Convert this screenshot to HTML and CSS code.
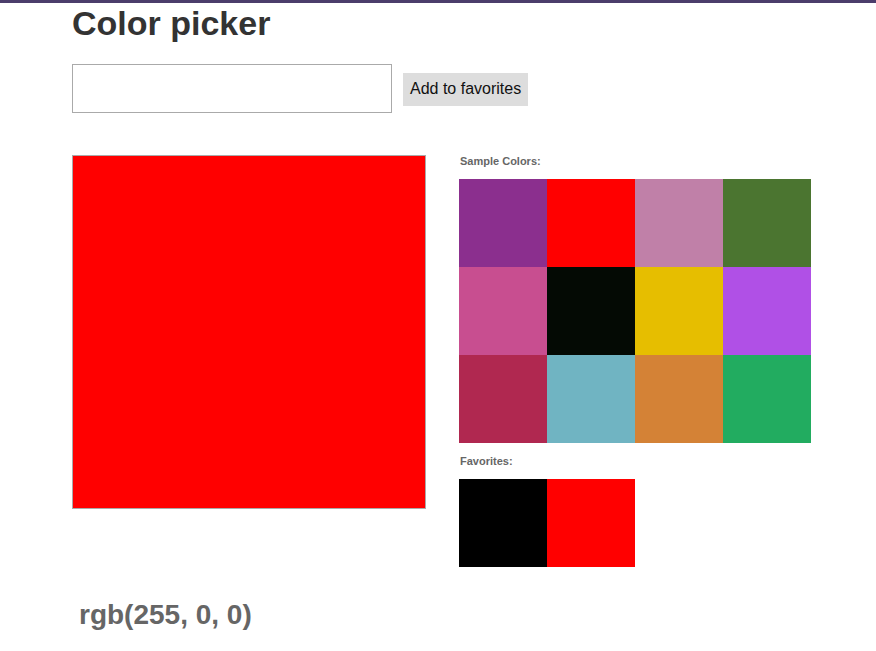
FILE: index.html
```html
<!DOCTYPE html>
<html>
<head>
<meta charset="utf-8">
<link rel="stylesheet" href="styles.css">
</head>
<body>
<div class="page">
  <h1 class="title">Color picker</h1>
  <div class="controls">
    <input class="color-input" type="text">
    <button class="fav-btn">Add to favorites</button>
  </div>
  <div class="main">
    <div class="preview"></div>
    <div class="side">
      <div class="label">Sample Colors:</div>
      <div class="swatches">
        <div class="sw" style="background:#8b2f8e"></div>
        <div class="sw" style="background:#ff0000"></div>
        <div class="sw" style="background:#c080a8"></div>
        <div class="sw" style="background:#4b7530"></div>
        <div class="sw" style="background:#c84e90"></div>
        <div class="sw" style="background:#040a04"></div>
        <div class="sw" style="background:#e6be00"></div>
        <div class="sw" style="background:#b050e6"></div>
        <div class="sw" style="background:#b02850"></div>
        <div class="sw" style="background:#70b4c2"></div>
        <div class="sw" style="background:#d48236"></div>
        <div class="sw" style="background:#22ac60"></div>
      </div>
      <div class="label fav-label">Favorites:</div>
      <div class="swatches">
        <div class="sw" style="background:#000000"></div>
        <div class="sw" style="background:#ff0000"></div>
      </div>
    </div>
  </div>
  <div class="rgb">rgb(255, 0, 0)</div>
</div>
</body>
</html>
```
FILE: styles.css
```css
html, body {
  margin: 0;
  padding: 0;
  background: #fff;
}
body {
  border-top: 3px solid #4b3d6b;
  font-family: "Liberation Sans", Arial, sans-serif;
}
.page {
  padding: 0 0 0 72px;
}
.title {
  margin: 0;
  font-size: 34px;
  font-weight: bold;
  color: #333;
  line-height: 40px;
}
.controls {
  margin-top: 21px;
  display: flex;
  align-items: center;
  gap: 11px;
}
.color-input {
  box-sizing: border-box;
  width: 320px;
  height: 49px;
  border: 1px solid #aaa;
  margin: 0;
  padding: 0 8px;
  font-size: 16px;
  font-family: "Liberation Sans", Arial, sans-serif;
  outline: none;
}
.fav-btn {
  margin: 0;
  margin-top: 1px;
  border: none;
  background: #ddd;
  color: #111;
  font-family: "Liberation Sans", Arial, sans-serif;
  font-size: 16px;
  height: 33px;
  padding: 0 7px 0 7px;
}
.main {
  margin-top: 42px;
  display: flex;
  align-items: flex-start;
  gap: 33px;
}
.preview {
  width: 352px;
  height: 352px;
  border: 1px solid #aaa;
  background: #ff0000;
}
.side {
  width: 352px;
}
.label {
  font-size: 11px;
  font-weight: bold;
  color: #666;
  padding-left: 1px;
  margin-bottom: 11px;
  line-height: 13px;
}
.fav-label {
  margin-top: 12px;
  margin-bottom: 11px;
}
.swatches {
  display: grid;
  grid-template-columns: repeat(4, 88px);
  grid-auto-rows: 88px;
}
.rgb {
  margin-top: 32px;
  margin-left: 7px;
  font-size: 28px;
  font-weight: bold;
  color: #666;
  line-height: 32px;
}
```
